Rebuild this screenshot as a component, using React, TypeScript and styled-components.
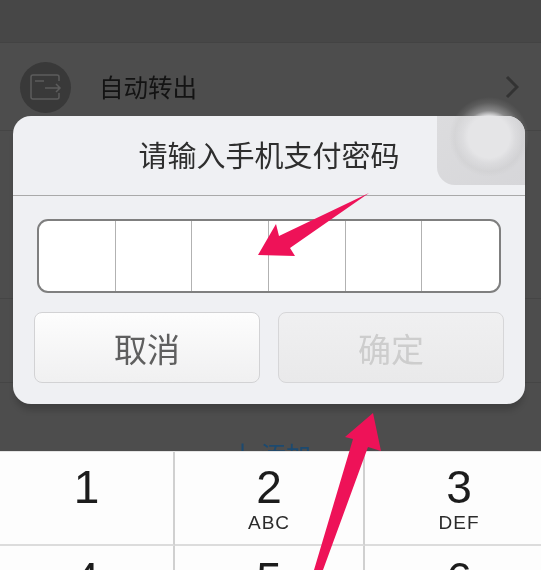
import React from 'react';
import styled, { createGlobalStyle } from 'styled-components';

const GlobalStyle = createGlobalStyle`
    html, body {
        margin: 0;
        padding: 0;
        background: #4d4d4d;
    }
    * {
        box-sizing: border-box;
    }
`;

const CJK = `"Noto Sans CJK SC", "Liberation Sans", sans-serif`;

const Page = styled.div`
    position: relative;
    width: 541px;
    height: 570px;
    overflow: hidden;
    display: flex;
    flex-direction: column;
    background: #4d4d4d;
    font-family: ${CJK};
    filter: blur(0.5px);
`;

const TopBar = styled.div`
    height: 43px;
    flex-shrink: 0;
    background: #474747;
    border-bottom: 1px solid #434343;
`;

const Row = styled.div<{ $height: number }>`
    height: ${props => props.$height}px;
    flex-shrink: 0;
    display: flex;
    align-items: center;
    padding: 0 22px 0 20px;
    border-bottom: 1px solid #454545;
`;

const RowIcon = styled.div`
    width: 51px;
    height: 51px;
    margin-top: 1px;
    border-radius: 50%;
    background: #393939;
    display: flex;
    align-items: center;
    justify-content: center;
`;

const RowLabel = styled.span`
    margin-left: 28px;
    font-size: 24.5px;
    color: #131313;
    flex: 1;
`;

const AddLink = styled.div`
    flex: 1;
    display: flex;
    justify-content: center;
    align-items: flex-start;
    gap: 6px;
    padding: 56px 0 0 0;
    color: #1c4a70;
    font-size: 25px;
    line-height: 30px;
`;

const Keyboard = styled.div`
    position: absolute;
    left: 0;
    top: 451px;
    width: 553px;
    height: 119px;
    display: grid;
    grid-template-columns: 175px 190px 188px;
    grid-auto-rows: 94px;
    background: #fdfdfd;
    border-top: 1px solid #e4e4e4;
`;

const Key = styled.div`
    display: flex;
    flex-direction: column;
    align-items: center;
    padding-top: 9px;
    border-right: 2px solid #d0d0d0;
    border-bottom: 2px solid #dcdcdc;
    &:nth-child(3n) {
        border-right: none;
    }
    &:nth-child(n+4) {
        padding-top: 7px;
    }
`;

const Digit = styled.span`
    font-family: "Liberation Sans", sans-serif;
    font-size: 46px;
    line-height: 52px;
    color: #1c1c1c;
`;

const Letters = styled.span`
    font-family: "Liberation Sans", sans-serif;
    font-size: 19px;
    line-height: 20px;
    letter-spacing: 1px;
    color: #2b2b2b;
`;

const Dialog = styled.div`
    position: absolute;
    left: 13px;
    top: 116px;
    width: 512px;
    height: 288px;
    border-radius: 18px;
    background: #eff0f3;
    overflow: hidden;
    box-shadow: 0 8px 6px -2px rgba(0, 0, 0, 0.18);
`;

const Title = styled.div`
    height: 80px;
    border-bottom: 1px solid #a9a9a9;
    display: flex;
    align-items: center;
    justify-content: center;
    font-size: 29px;
    color: #2e2e2e;
    padding-bottom: 3px;
`;

const PasswordBox = styled.div`
    margin: 23px 24px 0 24px;
    height: 74px;
    display: grid;
    grid-template-columns: repeat(6, 1fr);
    border: 2px solid #7f7f7f;
    border-radius: 11px;
    background: #fff;
    overflow: hidden;
`;

const PasswordCell = styled.div`
    border-right: 1.5px solid #b2b2b2;
    &:last-child {
        border-right: none;
    }
`;

const Actions = styled.div`
    display: flex;
    gap: 18px;
    margin: 19px 21px 0 21px;
`;

const ActionButton = styled.div<{ $disabled?: boolean }>`
    flex: 1;
    height: 71px;
    border-radius: 8px;
    border: 1px solid ${props => props.$disabled ? '#d6d6d8' : '#d2d2d4'};
    background: ${props => props.$disabled
        ? 'linear-gradient(#f0f0f1, #e9e9ea)'
        : 'linear-gradient(#fdfdfd, #f0f0f1)'};
    color: ${props => props.$disabled ? '#cdcdcd' : '#5f5f5f'};
    font-size: 33px;
    display: flex;
    align-items: center;
    justify-content: center;
`;

const FloatShade = styled.div`
    position: absolute;
    left: 437px;
    top: 116px;
    width: 88px;
    height: 69px;
    border-radius: 0 18px 0 18px;
    background: linear-gradient(135deg, #dcdcde, #d6d6d9);
`;

const FloatHalo = styled.div`
    position: absolute;
    left: 449px;
    top: 97px;
    width: 80px;
    height: 80px;
    border-radius: 50%;
    background: radial-gradient(circle closest-side, #e5e5e7 0 52%, rgba(224, 224, 226, 0.4) 66%, rgba(180, 180, 180, 0.15) 86%, rgba(120, 120, 120, 0) 100%);
`;

const Overlay = styled.svg`
    position: absolute;
    left: 0;
    top: 0;
    pointer-events: none;
`;

const keys = [
    ['1', ''],
    ['2', 'ABC'],
    ['3', 'DEF'],
    ['4', ''],
    ['5', ''],
    ['6', ''],
];

function App() {
    return (
        <>
            <GlobalStyle />
            <Page>
                <TopBar />
                <Row $height={88}>
                    <RowIcon>
                        <svg width="34" height="26" viewBox="0 0 34 26" fill="none" stroke="#5c5c5c" strokeWidth="1.5">
                            <path d="M30 7V3a2 2 0 0 0-2-2H4a2 2 0 0 0-2 2v20a2 2 0 0 0 2 2h24a2 2 0 0 0 2-2v-4" />
                            <path d="M6 7h9M16 14h15M27 10l4 4-4 4" />
                        </svg>
                    </RowIcon>
                    <RowLabel>自动转出</RowLabel>
                    <svg width="14" height="24" viewBox="0 0 14 24" fill="none" stroke="#333" strokeWidth="3">
                        <path d="M2 2l10 10L2 22" />
                    </svg>
                </Row>
                <Row $height={168} />
                <Row $height={84} />
                <AddLink><span>十</span><span>添加</span></AddLink>
                <Keyboard>
                    {keys.map(([digit, letters]) => (
                        <Key key={digit}>
                            <Digit>{digit}</Digit>
                            {letters && <Letters>{letters}</Letters>}
                        </Key>
                    ))}
                </Keyboard>
                <Dialog>
                    <Title>请输入手机支付密码</Title>
                    <PasswordBox>
                        {[0, 1, 2, 3, 4, 5].map(i => <PasswordCell key={i} />)}
                    </PasswordBox>
                    <Actions>
                        <ActionButton>取消</ActionButton>
                        <ActionButton $disabled>确定</ActionButton>
                    </Actions>
                </Dialog>
                <FloatShade />
                <FloatHalo />
                <Overlay width="541" height="570" viewBox="0 0 541 570">
                    <path fill="#ee1258" d="M369 193 L279 236 L276 224 L258 255 L295 256 L290 248 Z" />
                    <path fill="#ee1258" d="M373 413 L345 437 L353 439 L314 570 L323 570 L368 447 L381 451 Z" />
                </Overlay>
            </Page>
        </>
    );
}

export default App;
